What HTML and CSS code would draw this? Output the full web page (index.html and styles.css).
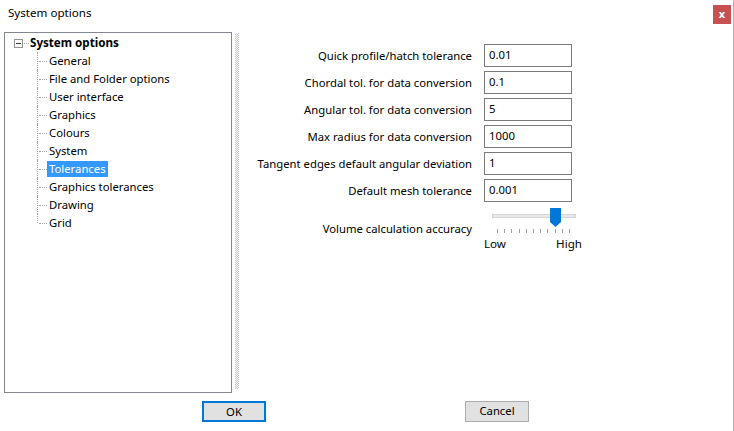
FILE: index.html
```html
<!DOCTYPE html>
<html>
<head>
<meta charset="utf-8">
<link rel="stylesheet" href="styles.css">
</head>
<body>
<div class="window">
  <div class="titlebar">
    <span class="title">System options</span>
    <span class="close">x</span>
  </div>
  <div class="main">
    <div class="tree">
      <div class="root">
        <span class="expander"><span class="minus"></span></span>
        <span class="rootdots"></span>
        <span class="roottext">System options</span>
      </div>
      <div class="children">
        <div class="item"><span class="label">General</span></div>
        <div class="item"><span class="label">File and Folder options</span></div>
        <div class="item"><span class="label">User interface</span></div>
        <div class="item"><span class="label">Graphics</span></div>
        <div class="item"><span class="label">Colours</span></div>
        <div class="item"><span class="label">System</span></div>
        <div class="item"><span class="label selected">Tolerances</span></div>
        <div class="item"><span class="label">Graphics tolerances</span></div>
        <div class="item"><span class="label">Drawing</span></div>
        <div class="item last"><span class="label">Grid</span></div>
      </div>
    </div>
    <div class="splitter"></div>
    <div class="form">
      <label class="flabel">Quick profile/hatch tolerance</label>
      <div class="input">0.01</div>
      <label class="flabel">Chordal tol. for data conversion</label>
      <div class="input">0.1</div>
      <label class="flabel">Angular tol. for data conversion</label>
      <div class="input">5</div>
      <label class="flabel">Max radius for data conversion</label>
      <div class="input">1000</div>
      <label class="flabel">Tangent edges default angular deviation</label>
      <div class="input">1</div>
      <label class="flabel">Default mesh tolerance</label>
      <div class="input">0.001</div>
      <label class="flabel slabel">Volume calculation accuracy</label>
      <div class="slider">
        <div class="track"></div>
        <svg class="thumb" width="11" height="19" viewBox="0 0 11 19"><polygon points="0,0 11,0 11,14 5.5,19 0,14" fill="#0078d7"/></svg>
        <div class="ticks">
          <i></i><i></i><i></i><i></i><i></i><i></i><i></i><i></i><i></i><i></i><i></i>
        </div>
        <div class="ends"><span>Low</span><span>High</span></div>
      </div>
    </div>
  </div>
  <div class="buttons">
    <div class="btn ok">OK</div>
    <div class="btn cancel">Cancel</div>
  </div>
</div>
</body>
</html>
```
FILE: styles.css
```css
html, body {
  margin: 0;
  padding: 0;
  background: #fff;
}
body {
  font-family: "Noto Sans", "Open Sans", sans-serif;
  font-size: 11.3px;
  color: #000;
}
.window {
  width: 733px;
  height: 431px;
  border-right: 1px solid #b4b4b4;
  display: flex;
  flex-direction: column;
  overflow: hidden;
}
.titlebar {
  height: 32px;
  display: flex;
  align-items: flex-start;
}
.title {
  margin-left: 8px;
  margin-top: 4px;
  line-height: 18px;
  font-size: 11.6px;
}
.close {
  margin-left: auto;
  margin-right: 2px;
  margin-top: 5px;
  width: 18px;
  height: 19px;
  background: #c75050;
  color: #fff;
  font-weight: bold;
  font-size: 11px;
  line-height: 17px;
  text-align: center;
}
.main {
  display: flex;
  padding-left: 4px;
  height: 360px;
}
.tree {
  width: 226px;
  height: 358px;
  border: 1px solid #828790;
  padding-top: 1px;
  box-sizing: content-box;
}
.root {
  height: 18px;
  display: flex;
  align-items: center;
}
.expander {
  margin-left: 9px;
  width: 7px;
  height: 7px;
  border: 1px solid #919191;
  position: relative;
  display: flex;
  align-items: center;
  justify-content: center;
}
.minus {
  width: 5px;
  height: 1px;
  background: #3c3c3c;
}
.rootdots {
  width: 5px;
  margin-left: 1px;
  border-top: 1px dotted #a0a0a0;
}
.roottext {
  margin-left: 1px;
  font-weight: bold;
  line-height: 16px;
  font-size: 11.6px;
}
.children {
  margin-left: 32px;
}
.item {
  position: relative;
  height: 18px;
  display: flex;
  align-items: center;
}
.item::before {
  content: "";
  position: absolute;
  left: 0;
  top: 0;
  height: 100%;
  border-left: 1px dotted #a0a0a0;
}
.item.last::before {
  height: 9px;
}
.item::after {
  content: "";
  position: absolute;
  left: 2px;
  top: 9px;
  width: 8px;
  border-top: 1px dotted #a0a0a0;
}
.label {
  margin-left: 10px;
  padding: 0 2px;
  line-height: 16px;
}
.selected {
  background: #3399ff;
  color: #fff;
  padding: 0 2px 0 2px;
}
.splitter {
  margin-left: 3px;
  margin-top: 1px;
  width: 4px;
  height: 356px;
  background: repeating-conic-gradient(#c4c4c4 0 25%, transparent 0 50%) 0 0 / 2px 2px;
}
.form {
  margin-left: 3px;
  padding-top: 12px;
  display: grid;
  grid-template-columns: 230px 88px;
  column-gap: 12px;
  row-gap: 4px;
  align-content: start;
  align-items: center;
}
.flabel {
  justify-self: end;
  line-height: 16px;
}
.input {
  height: 21px;
  border: 1px solid #7a7a7a;
  padding-left: 4px;
  line-height: 20px;
  box-sizing: content-box;
  width: 82px;
}
.slabel {
  align-self: start;
  margin-top: 15px;
}
.slider {
  position: relative;
  height: 52px;
  margin-top: 2px;
  width: 100px;
}
.track {
  margin-left: 8px;
  margin-top: 6px;
  width: 82px;
  height: 2px;
  background: #e7e7e7;
  border: 1px solid #d6d6d6;
}
.thumb {
  position: absolute;
  left: 66px;
  top: 0;
}
.ticks {
  display: flex;
  justify-content: space-between;
  margin-left: 13px;
  width: 73px;
  margin-top: 11px;
}
.ticks i {
  width: 1px;
  height: 4px;
  background: #a0a0a0;
}
.ends {
  display: flex;
  justify-content: space-between;
  width: 98px;
  margin-top: 3px;
  line-height: 16px;
  font-size: 11.6px;
}
.buttons {
  display: flex;
  padding-left: 202px;
  margin-top: 9px;
  gap: 199px;
}
.btn {
  width: 64px;
  height: 21px;
  box-sizing: border-box;
  background: #e1e1e1;
  text-align: center;
  line-height: 18px;
}
.ok {
  border: 2px solid #0078d7;
  line-height: 17px;
}
.cancel {
  border: 1px solid #adadad;
}
```
